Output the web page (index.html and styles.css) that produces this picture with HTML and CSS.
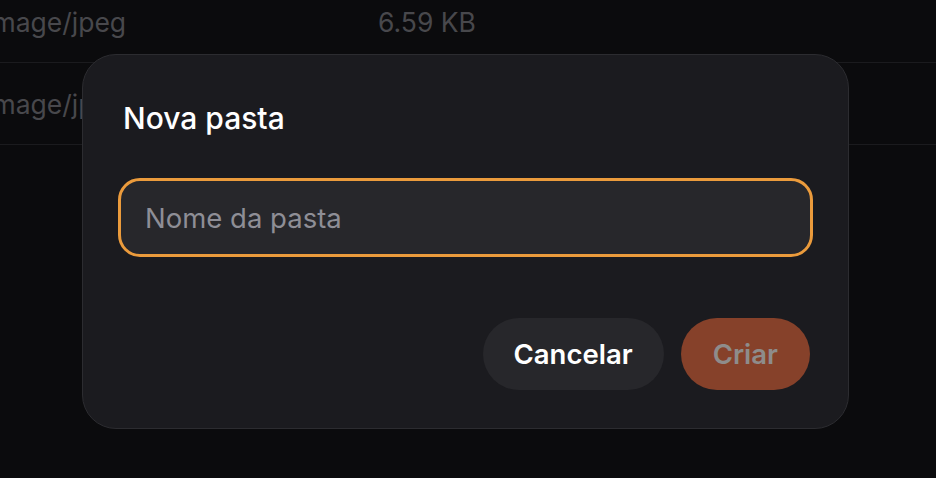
FILE: index.html
```html
<!DOCTYPE html>
<html lang="pt">
<head>
<meta charset="utf-8">
<title>Nova pasta</title>
<link rel="stylesheet" href="styles.css">
</head>
<body>
<div class="page">
  <div class="table">
    <div class="row row-first">
      <span class="cell type">image/jpeg</span>
      <span class="cell size">6.59 KB</span>
    </div>
    <div class="row">
      <span class="cell type">image/jpeg</span>
      <span class="cell size">6.59 KB</span>
    </div>
  </div>
</div>
<div class="overlay">
  <div class="modal">
    <h2 class="modal-title">Nova pasta</h2>
    <input class="field" type="text" placeholder="Nome da pasta">
    <div class="actions">
      <button class="btn btn-cancel" type="button">Cancelar</button>
      <button class="btn btn-create" type="button" disabled>Criar</button>
    </div>
  </div>
</div>
</body>
</html>
```
FILE: styles.css
```css
* { box-sizing: border-box; }
html, body {
  margin: 0;
  padding: 0;
  width: 936px;
  height: 478px;
  overflow: hidden;
  background: #0b0b0d;
  font-family: Inter, "Noto Sans", "Liberation Sans", sans-serif;
}
.page {
  width: 100%;
  height: 100%;
}
.table {
  margin-left: -14px;
  margin-top: -19px;
}
.row {
  display: flex;
  align-items: center;
  height: 82px;
  border-bottom: 1px solid #1b1b1e;
}
.cell {
  font-size: 26.5px;
  color: #48484c;
}
.type { width: 392px; }
.overlay {
  position: absolute;
  inset: 0;
}
.modal {
  position: absolute;
  left: 82px;
  top: 54px;
  width: 767px;
  height: 375px;
  background: #1b1b1f;
  border: 1px solid #2c2c30;
  border-radius: 34px;
  padding: 45px 35px 0 35px;
  display: flex;
  flex-direction: column;
}
.modal-title {
  margin: 0 0 42px 5px;
  font-size: 30px;
  line-height: 36px;
  font-weight: 500;
  color: #ffffff;
}
.field {
  width: 100%;
  height: 79px;
  border: 3px solid #eb9b3c;
  border-radius: 22px;
  background: #27272b;
  padding: 0 24px;
  font-family: inherit;
  font-size: 27.5px;
  color: #ffffff;
  outline: none;
}
.field::placeholder { color: #8e8e96; }
.actions {
  display: flex;
  justify-content: flex-end;
  gap: 17px;
  margin-top: 61px;
  padding-right: 3px;
}
.btn {
  height: 72px;
  border: none;
  border-radius: 36px;
  padding: 0 32px;
  font-family: inherit;
  font-size: 27.5px;
  font-weight: 600;
}
.btn-cancel {
  background: #27272b;
  color: #ffffff;
  padding: 0 31px;
}
.btn-create {
  background: #86412a;
  color: #8e8c8b;
}
```
